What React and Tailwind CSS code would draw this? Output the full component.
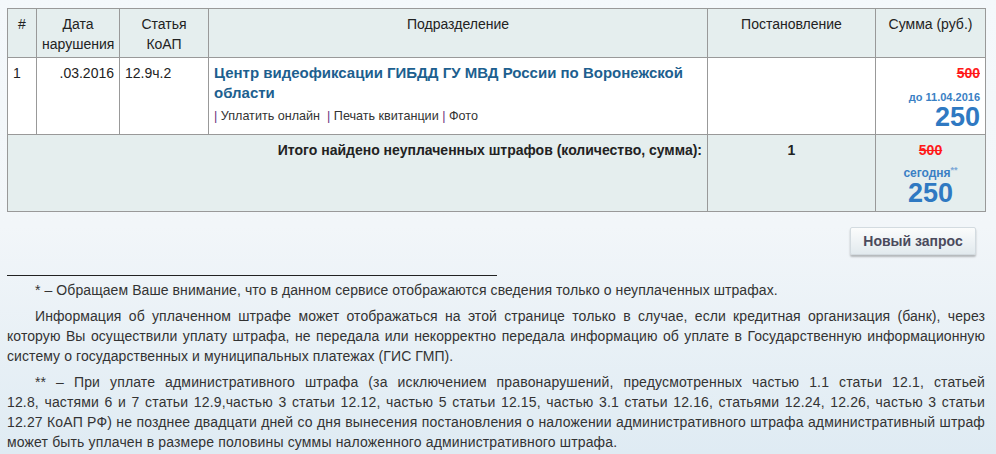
import React from "react";

const fine = {
  num: "1",
  date: ".03.2016",
  article: "12.9ч.2",
  dept: "Центр видеофиксации ГИБДД ГУ МВД России по Воронежской области",
  sum: "500",
  discountDate: "11.04.2016",
  discountSum: "250",
};

const th = "border border-[#999] align-top font-normal px-[5px] pt-[5px] text-center leading-[20px]";
const td = "border border-[#999] align-top px-[5px] pt-[5px]";

const App = () => {
  return (
    <div className="w-[996px] h-[454px] overflow-hidden bg-gradient-to-b from-[#f4f8fb] via-[#f2f6f9] to-[#dfebf3] font-['Liberation_Sans',Arial,sans-serif] text-[14px] text-[#222]">
      <div className="pt-[8px] pl-[7px] pr-[11px]">
        <table className="w-[978px] border-collapse table-fixed">
          <colgroup>
            <col className="w-[29px]" />
            <col className="w-[83px]" />
            <col className="w-[89px]" />
            <col className="w-[499px]" />
            <col className="w-[168px]" />
            <col className="w-[110px]" />
          </colgroup>
          <thead>
            <tr className="bg-[#e5eeee] h-[49px]">
              <th className={th}>#</th>
              <th className={th}>
                Дата
                <br />
                нарушения
              </th>
              <th className={th}>
                Статья
                <br />
                КоАП
              </th>
              <th className={th}>Подразделение</th>
              <th className={th}>Постановление</th>
              <th className={th}>Сумма (руб.)</th>
            </tr>
          </thead>
          <tbody>
            <tr className="bg-white h-[77px]">
              <td className={td + " leading-[20px]"}>{fine.num}</td>
              <td className={td + " text-right leading-[20px]"}>{fine.date}</td>
              <td className={td + " leading-[20px]"}>{fine.article}</td>
              <td className={td}>
                <div className="font-bold text-[15px] text-[#1d5f8f] leading-[20px]">{fine.dept}</div>
                <div className="text-[12.6px] text-[#333] mt-[5px] leading-[16px]">
                  <span className="text-[#6b2f7a]">|</span> Уплатить онлайн&nbsp;&nbsp;
                  <span className="text-[#6b2f7a]">|</span> Печать квитанции{" "}
                  <span className="text-[#6b2f7a]">|</span> Фото
                </div>
              </td>
              <td className={td}></td>
              <td className={td + " text-right font-bold"}>
                <div className="text-[#ff1a1a] line-through leading-[20px]">{fine.sum}</div>
                <div className="text-[#3a7fc4] text-[11px] leading-[14px] mt-[7px]">до {fine.discountDate}</div>
                <div className="text-[#2f79c2] text-[27px] leading-[26px]">{fine.discountSum}</div>
              </td>
            </tr>
            <tr className="bg-[#e5eeee] h-[77px]">
              <td colSpan={4} className={td + " text-right font-bold leading-[20px]"}>
                Итого найдено неуплаченных штрафов (количество, сумма):
              </td>
              <td className={td + " text-center font-bold leading-[20px]"}>1</td>
              <td className={td + " text-center font-bold"}>
                <div className="text-[#ff1a1a] line-through leading-[20px]">{fine.sum}</div>
                <div className="text-[#3a7fc4] text-[12px] leading-[14px] mt-[6px]">
                  сегодня
                  <span className="align-top text-[#7aa7d6] text-[9px] leading-[9px]">**</span>
                </div>
                <div className="text-[#2f79c2] text-[27px] leading-[26px]">{fine.discountSum}</div>
              </td>
            </tr>
          </tbody>
        </table>

        <div className="flex justify-end mt-[15px] pr-[9px]">
          <button className="w-[126px] h-[28px] border border-[#d3dbe0] rounded-[2px] bg-gradient-to-b from-[#fbfcfc] to-[#e2eaee] shadow-[0_2px_2px_rgba(0,0,0,0.25)] text-[#4a4a5c] font-bold text-[14px]">
            Новый запрос
          </button>
        </div>

        <div className="w-[490px] border-t border-[#222] mt-[20px]" />

        <div className="text-[#333] leading-[20px] text-justify tracking-[0.08px]">
          <p className="indent-[28px] mt-[4px]">
            * – Обращаем Ваше внимание, что в данном сервисе отображаются сведения только о неуплаченных штрафах.
          </p>
          <p className="indent-[28px] mt-[6px]">
            Информация об уплаченном штрафе может отображаться на этой странице только в случае, если кредитная организация (банк), через которую Вы осуществили уплату штрафа, не передала или некорректно передала информацию об уплате в Государственную информационную систему о государственных и муниципальных платежах (ГИС ГМП).
          </p>
          <p className="indent-[28px] mt-[6px] tracking-[0.15px]">
            <span className="[word-spacing:4px]">
              ** – При уплате административного штрафа (за исключением правонарушений, предусмотренных частью 1.1 статьи 12.1, статьей
            </span>{" "}
            12.8, частями 6 и 7 статьи 12.9,частью 3 статьи 12.12, частью 5 статьи 12.15, частью 3.1 статьи 12.16, статьями 12.24, 12.26, частью 3 статьи 12.27 КоАП РФ) не позднее двадцати дней со дня вынесения постановления о наложении административного штрафа административный штраф может быть уплачен в размере половины суммы наложенного административного штрафа.
          </p>
        </div>
      </div>
    </div>
  );
};

export default App;
